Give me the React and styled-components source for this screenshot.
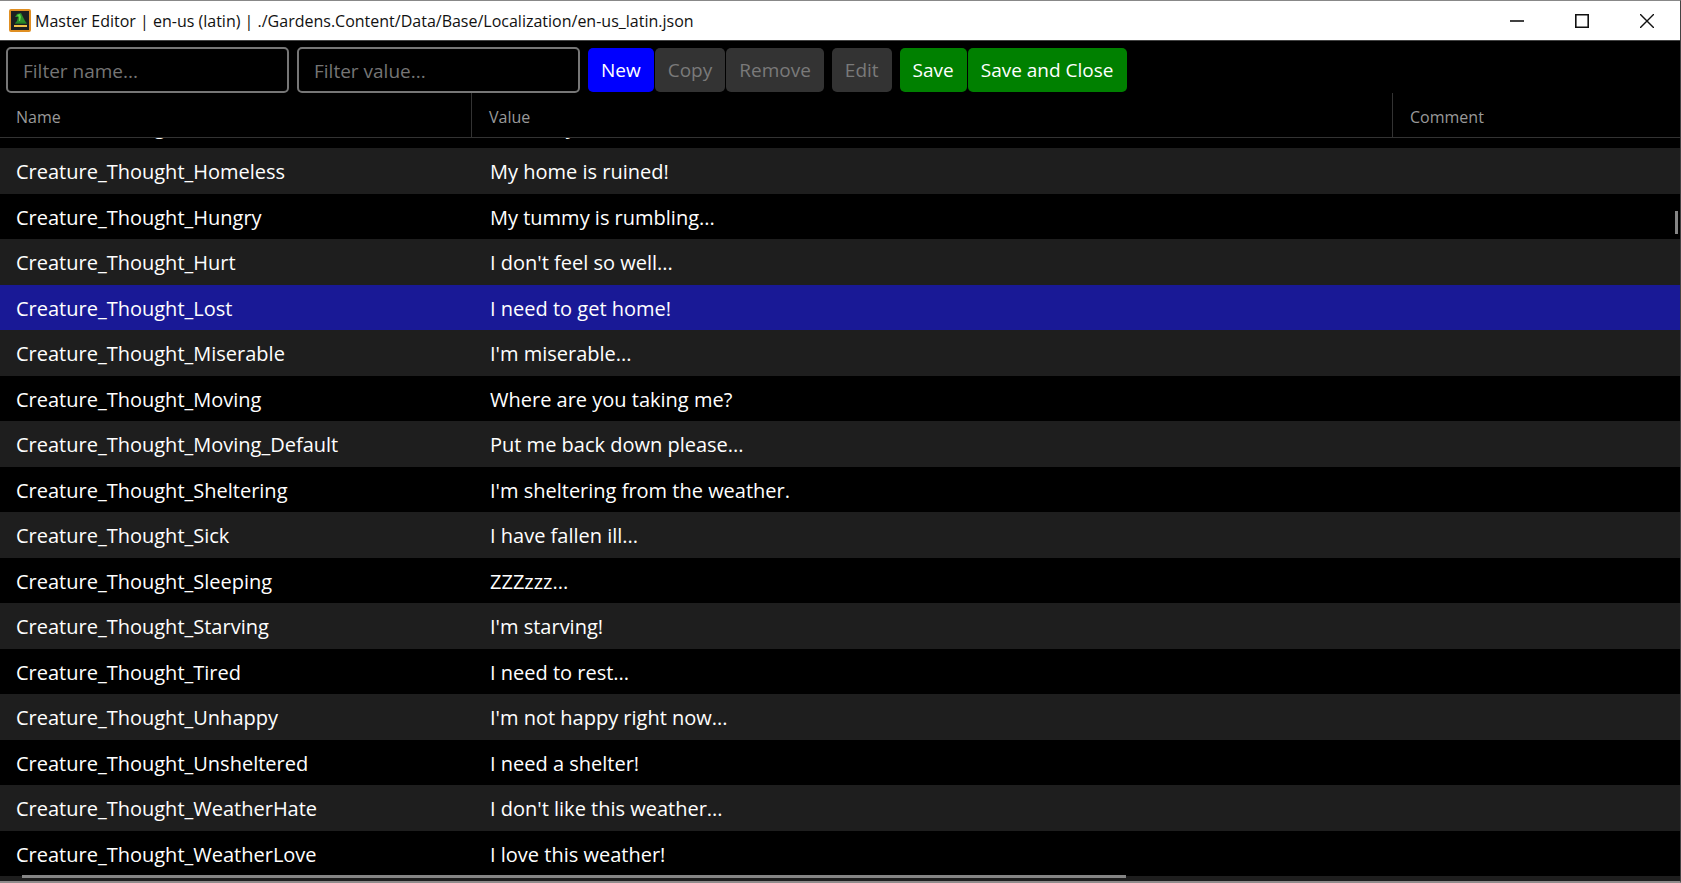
import React, {useLayoutEffect, useRef} from 'react'
import styled, {createGlobalStyle, css} from 'styled-components'

const GlobalStyle = createGlobalStyle`
	* {
		box-sizing: border-box;
	}
	body {
		margin: 0;
		background: #000;
		color: #fff;
		font-family: 'Open Sans', 'Noto Sans', sans-serif;
	}
	button, input {
		font-family: inherit;
	}
`
const Window = styled.div`
	display: flex;
	flex-direction: column;
	height: 100vh;
	border-top: 1px solid #888;
	border-right: 1px solid #444;
	border-bottom: 2px solid #8f8b8b;
	overflow: hidden;
`
const TitleBar = styled.header`
	display: flex;
	align-items: center;
	flex: none;
	height: 40px;
	padding: 0 1px 0 9px;
	background: #fff;
	color: #111;
	border-bottom: 1px solid #444;
`
const Title = styled.h1`
	flex: 1;
	margin: 0 0 0 4px;
	font-size: 16px;
	font-weight: 400;
	white-space: nowrap;
`
const WindowButton = styled.button`
	display: flex;
	align-items: center;
	justify-content: center;
	width: 65px;
	height: 38px;
	padding: 0;
	border: none;
	background: none;
	color: #111;
`
const Toolbar = styled.div`
	display: flex;
	flex: none;
	gap: 8px;
	padding: 6px 6px 0;
`
const Filter = styled.input`
	width: 283px;
	height: 46px;
	padding: 2px 15px 0;
	border: 2px solid #767676;
	border-radius: 5px;
	background: #000;
	color: #fff;
	font-size: 19px;
	&::placeholder {
		color: #757575;
		opacity: 1;
	}
`
const ButtonGroup = styled.div`
	display: flex;
	gap: 1px;
	padding: 1px 0;
`
const tones = {
	primary: '#0000ff',
	success: '#008000'
}
const Button = styled.button`
	height: 44px;
	padding: 0 13px;
	border: none;
	border-radius: 5px;
	background: ${props => tones[props.$tone]};
	color: #fff;
	font-size: 19px;
	white-space: nowrap;
	&:disabled {
		background: #333;
		color: #7a7a7a;
	}
`
const GridArea = styled.main`
	position: relative;
	flex: 1;
	min-height: 0;
	padding-bottom: 5px;
	background: #1e1e1e;
`
const Table = styled.table`
	display: flex;
	flex-direction: column;
	height: 100%;
	background: #000;
`
const Head = styled.thead`
	display: block;
	flex: none;
	border-bottom: 1px solid #333;
`
const Body = styled.tbody`
	display: block;
	flex: 1;
	min-height: 0;
	overflow: auto;
	scrollbar-width: none;
`
const columns = css`
	display: grid;
	grid-template-columns: 471px 921px 1fr;
`
const HeadRow = styled.tr`
	${columns}
	height: 44px;
`
const HeadCell = styled.th`
	padding: 12px 17px 8px;
	border-left: 1px solid #333;
	color: #999;
	font-size: 16px;
	line-height: 24px;
	font-weight: 400;
	text-align: left;
	&:first-child {
		padding-left: 16px;
		border-left: none;
	}
`
const Cell = styled.td`
	padding: 9px 19px 6px;
	font-size: 20px;
	line-height: 30px;
	white-space: nowrap;
	&:first-child {
		padding-left: 16px;
	}
`
const Row = styled.tr`
	${columns}
	height: 45px;
	&:nth-child(even) {
		height: 46px;
		background: #1e1e1e;
	}
	${props => props.$selected && css`
		background: #191996;
	`}
`
const thumb = css`
	position: absolute;
	background: #858585;
`
const VerticalThumb = styled.div`
	${thumb}
	top: 118px;
	right: 2px;
	width: 3px;
	height: 23px;
`
const HorizontalThumb = styled.div`
	${thumb}
	left: 22px;
	right: 33%;
	bottom: 3px;
	height: 3px;
`

const entries = [
	['Default', 'I feel lazy...'],
	['Homeless', 'My home is ruined!'],
	['Hungry', 'My tummy is rumbling...'],
	['Hurt', 'I don\'t feel so well...'],
	['Lost', 'I need to get home!'],
	['Miserable', 'I\'m miserable...'],
	['Moving', 'Where are you taking me?'],
	['Moving_Default', 'Put me back down please...'],
	['Sheltering', 'I\'m sheltering from the weather.'],
	['Sick', 'I have fallen ill...'],
	['Sleeping', 'ZZZzzz...'],
	['Starving', 'I\'m starving!'],
	['Tired', 'I need to rest...'],
	['Unhappy', 'I\'m not happy right now...'],
	['Unsheltered', 'I need a shelter!'],
	['WeatherHate', 'I don\'t like this weather...'],
	['WeatherLove', 'I love this weather!']
]

const AppIcon = () => (
	<svg width="22" height="23" viewBox="0 0 22 23" aria-hidden="true">
		<rect x="1" y="1" width="20" height="21" rx="1" fill="#1c1f22" stroke="#e08f22" strokeWidth="2"/>
		<path d="M6 8 L8 5 L12 4 L14 8 L16 12 L18 14.5 L6 14.5 L8 12 L9 8 Z" fill="#2c8f2a"/>
		<path d="M8 6 L11 5 L12 8 L11 12 L10 12 L10 8 Z" fill="#62d84a"/>
		<path d="M6 14.2 H17" stroke="#1f6b22" strokeWidth="1"/>
		<rect x="5" y="16" width="13" height="2" fill="#f2c14a"/>
	</svg>
)

const App = () => {
	const body = useRef(null)

	// Open on the end of the list
	useLayoutEffect(() => {
		body.current.scrollTop = body.current.scrollHeight
	}, [])

	return (
		<Window>
			<GlobalStyle/>
			<TitleBar>
				<AppIcon/>
				<Title>Master Editor | en-us (latin) | ./Gardens.Content/Data/Base/Localization/en-us_latin.json</Title>
				<WindowButton aria-label="Minimize">
					<svg width="14" height="14" stroke="currentColor" strokeWidth="1.6"><path d="M0 7H14"/></svg>
				</WindowButton>
				<WindowButton aria-label="Maximize">
					<svg width="14" height="14" fill="none" stroke="currentColor" strokeWidth="1.6"><path d="M.8 .8H13.2V13.2H.8Z"/></svg>
				</WindowButton>
				<WindowButton aria-label="Close">
					<svg width="14" height="14" stroke="currentColor" strokeWidth="1.4"><path d="M0 0L14 14M14 0L0 14"/></svg>
				</WindowButton>
			</TitleBar>
			<Toolbar>
				<Filter aria-label="Filter name" placeholder="Filter name..."/>
				<Filter aria-label="Filter value" placeholder="Filter value..."/>
				<ButtonGroup>
					<Button $tone="primary">New</Button>
					<Button disabled>Copy</Button>
					<Button disabled>Remove</Button>
				</ButtonGroup>
				<ButtonGroup>
					<Button disabled>Edit</Button>
				</ButtonGroup>
				<ButtonGroup>
					<Button $tone="success">Save</Button>
					<Button $tone="success">Save and Close</Button>
				</ButtonGroup>
			</Toolbar>
			<GridArea>
				<Table>
					<Head>
						<HeadRow>
							<HeadCell>Name</HeadCell>
							<HeadCell>Value</HeadCell>
							<HeadCell>Comment</HeadCell>
						</HeadRow>
					</Head>
					<Body ref={body}>
						{entries.map(([name, value]) => (
							<Row key={name} $selected={name === 'Lost'}>
								<Cell>{`Creature_Thought_${name}`}</Cell>
								<Cell>{value}</Cell>
								<Cell/>
							</Row>
						))}
					</Body>
				</Table>
				<VerticalThumb/>
				<HorizontalThumb/>
			</GridArea>
		</Window>
	)
}

export default App
